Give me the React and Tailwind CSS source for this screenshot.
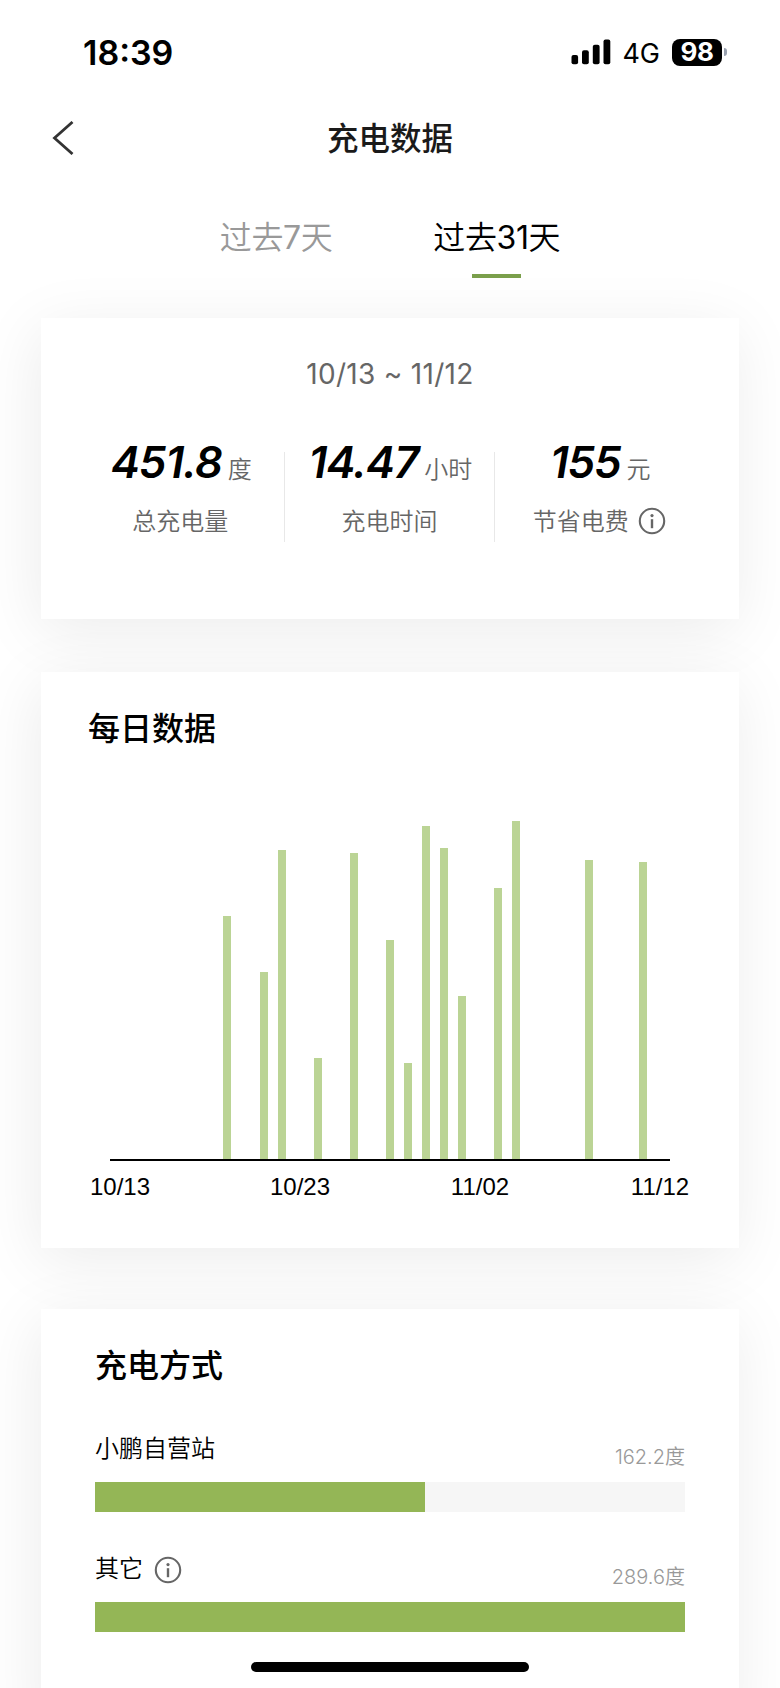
import React, { useState } from "react";

const stats = [
  { value: "451.8", unit: "度", label: "总充电量" },
  { value: "14.47", unit: "小时", label: "充电时间" },
  { value: "155", unit: "元", label: "节省电费", info: true },
];

// bar heights in px, one slot per day from 10/13 to 11/12
const daily = [
  0, 0, 0, 0, 0, 0, 243, 0, 187, 309, 0, 101, 0, 306, 0, 219, 96, 333, 311,
  163, 0, 271, 338, 0, 0, 0, 299, 0, 0, 297, 0,
];

const methods = [
  { name: "小鹏自营站", value: 162.2 },
  { name: "其它", value: 289.6, info: true },
];

const InfoIcon = () => (
  <svg width="28" height="28" viewBox="0 0 28 28" fill="none">
    <circle cx="14" cy="14" r="12.2" stroke="#666" strokeWidth="2.1" />
    <circle cx="14" cy="8.6" r="1.6" fill="#666" />
    <path d="M14 12.2v9" stroke="#666" strokeWidth="2.4" />
  </svg>
);

const StatusBar = () => (
  <div className="flex h-[104px] items-center justify-between pl-[83px] pr-[53px]">
    <div className="pt-px text-[34px] leading-none font-semibold">18:39</div>
    <div className="flex items-center">
      <svg width="40" height="26" viewBox="0 0 40 26">
        <rect x="0.5" y="16" width="6.6" height="9.3" rx="2" />
        <rect x="11" y="11.3" width="6.8" height="14" rx="2" />
        <rect x="21.8" y="5.8" width="6.8" height="19.5" rx="2" />
        <rect x="32.5" y="0.4" width="6.8" height="24.9" rx="2" />
      </svg>
      <div className="ml-[11px] pt-[2px] text-[27px] leading-none">4G</div>
      <div className="ml-3 flex h-[27px] w-[50px] items-center justify-center rounded-lg bg-black text-[26px] leading-none font-bold tracking-[-0.5px] text-white">
        98
      </div>
      <div className="ml-[2px] h-2 w-[3px] rounded-r-full bg-gray-400" />
    </div>
  </div>
);

const Card = ({ className, children }) => (
  <section
    className={`mx-[41px] bg-white shadow-[-3px_12px_60px_rgba(0,0,0,0.08)] ${className}`}
  >
    {children}
  </section>
);

const App = () => {
  const [active, setActive] = useState(1);

  return (
    <div className="relative h-[1688px] w-[780px] overflow-hidden bg-white font-['Inter','Noto_Sans_CJK_SC',sans-serif] text-black">
      <StatusBar />

      {/* Header */}
      <header className="grid h-[68px] grid-cols-3 items-center">
        <button className="ml-[52px] w-6">
          <svg width="24" height="34" viewBox="0 0 24 34" fill="none">
            <path d="M20.5 1L2.5 17l18 16" stroke="#333" strokeWidth="2.8" />
          </svg>
        </button>
        <h1 className="pt-[2px] text-center text-[31.5px] leading-none font-medium text-[#1a1a1a]">充电数据</h1>
      </header>

      {/* Tabs */}
      <div className="flex h-[146px] justify-center gap-[101px] pt-[49px]">
        {["7", "31"].map((days, index) => (
          <button
            key={days}
            onClick={() => setActive(index)}
            className={`flex h-[57px] flex-col items-center justify-between text-[32px] leading-[34px] font-[350] tracking-[-0.4px] ${
              index === active ? "text-black" : "text-[#999]"
            }`}
          >
            <span>
              过去<span className="font-normal">{days}</span>天
            </span>
            {index === active && <span className="h-1 w-[49px] bg-[#7a9f4b]" />}
          </button>
        ))}
      </div>

      {/* Summary */}
      <Card className="h-[301px]">
        <div className="pt-[40px] text-center text-[28px] leading-8 tracking-[0.3px] text-[#666]">
          10/13 ~ 11/12
        </div>
        <div className="mt-[50px] flex px-[35px]">
          {stats.map((item, index) => (
            <div key={item.label} className="flex flex-1">
              <div className="flex flex-1 flex-col items-center">
                <div className="flex h-[52px] items-baseline gap-[6px] pl-[2px]">
                  <span className="text-[44px] leading-[44px] font-semibold tracking-[-1.1px] italic">
                    {item.value}
                  </span>
                  <span className="text-2xl leading-[44px] font-[350] text-[#666]">{item.unit}</span>
                </div>
                <div className="mt-4 flex h-7 items-center gap-[9px] text-2xl leading-7 font-[350] text-[#666]">
                  {item.label}
                  {item.info && (
                    <span className="-mt-[2px]">
                      <InfoIcon />
                    </span>
                  )}
                </div>
              </div>
              {index < 2 && <div className="mt-3 h-[90px] w-px bg-[#e8e8e8]" />}
            </div>
          ))}
        </div>
      </Card>

      {/* Daily chart */}
      <Card className="mt-[53px] h-[576px]">
        <h2 className="pt-[40px] pl-[47px] text-[32px] leading-[34px] font-medium">每日数据</h2>
        <div className="mx-[69px] mt-[73px] flex h-[342px] items-end border-b-2 border-black">
          {daily.map((height, index) => (
            <div key={index} className="flex flex-1 justify-center">
              <div className="w-2 bg-[#bbd495]" style={{ height }} />
            </div>
          ))}
        </div>
        <div className="mt-[11px] flex justify-between px-[39px] font-['Liberation_Sans',sans-serif] text-2xl leading-[30px]">
          {["10/13", "10/23", "11/02", "11/12"].map((date) => (
            <span key={date} className="w-20 text-center">
              {date}
            </span>
          ))}
        </div>
      </Card>

      {/* Charging methods */}
      <Card className="mt-[61px] h-[420px] px-[54px]">
        <h2 className="pt-[40px] text-[32px] leading-[34px] font-medium">充电方式</h2>
        {methods.map((item, index) => (
          <div key={item.name} className={index === 0 ? "mt-[50px]" : "mt-[41px]"}>
            <div className="flex h-[49px] justify-between">
              <div className="flex h-8 items-center gap-[11px] text-2xl leading-8 font-[350]">
                {item.name}
                {item.info && (
                  <span className="pt-[2px]">
                    <InfoIcon />
                  </span>
                )}
              </div>
              <div className="pt-2 text-xl leading-8 font-[350] text-[#999]">{item.value}度</div>
            </div>
            <div className="h-[30px] bg-[#f6f6f6]">
              <div
                className="h-full bg-[#94b656]"
                style={{ width: `${(item.value / 289.6) * 100}%` }}
              />
            </div>
          </div>
        ))}
      </Card>

      <div className="absolute bottom-4 left-[251px] h-[10px] w-[278px] rounded-full bg-black" />
    </div>
  );
};

export default App;
